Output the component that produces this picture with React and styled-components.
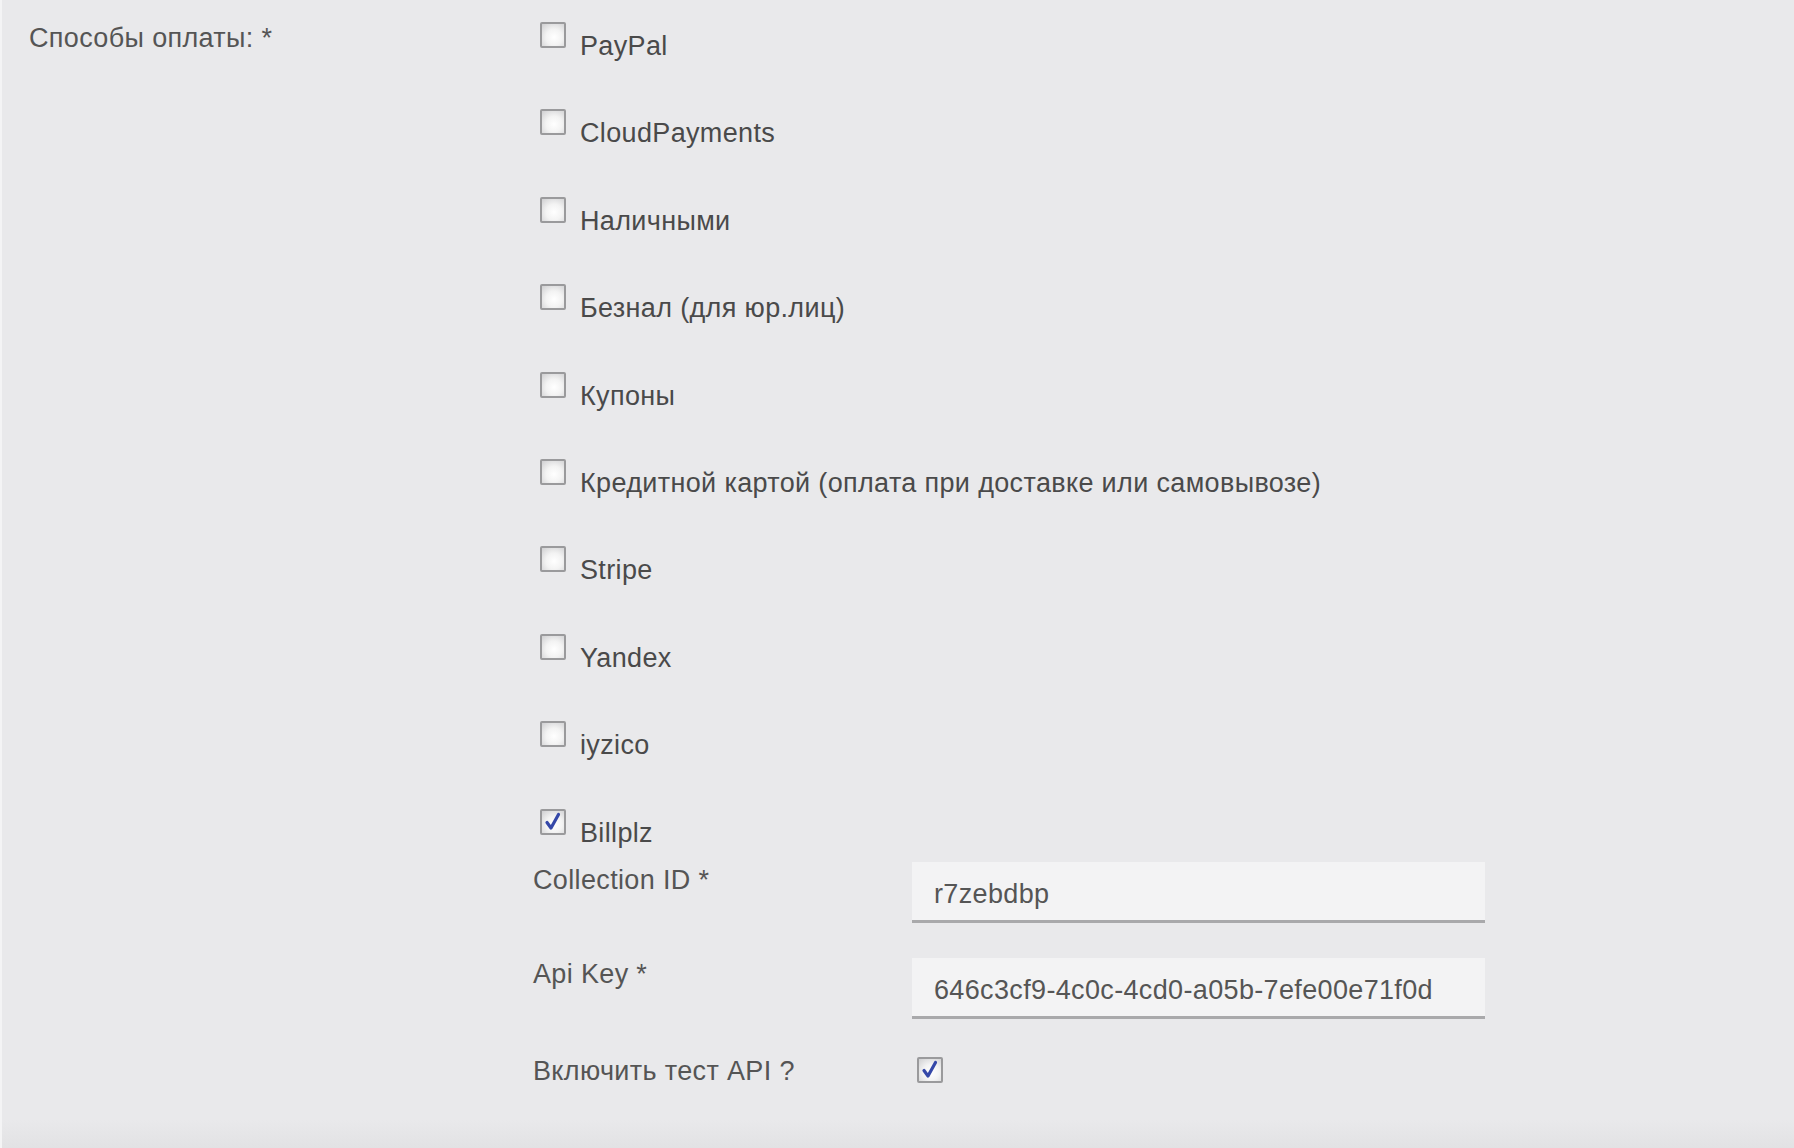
import React from "react";
import styled, { createGlobalStyle } from "styled-components";

const GlobalStyle = createGlobalStyle`
  html, body {
    margin: 0;
    padding: 0;
    background: #e9e9eb;
  }
  body {
    font-family: "Liberation Sans", Arial, sans-serif;
    color: #505050;
  }
`;

const Page = styled.div`
  min-height: 1148px;
  box-sizing: border-box;
  border-left: 2px solid #f4f4f5;
  background: linear-gradient(#e9e9eb 0, #e9e9eb 1120px, #e2e2e4 1148px);
  display: grid;
  grid-template-columns: 530px 1fr;
`;

const FieldLabel = styled.div`
  font-size: 27px;
  letter-spacing: 0.35px;
  line-height: 29px;
  color: #555;
  padding: 24px 0 0 27px;
`;

const Options = styled.div`
  display: flex;
  flex-direction: column;
`;

const OptionRow = styled.label`
  display: flex;
  align-items: flex-start;
  height: 87.4px;
  cursor: pointer;
`;

const OptionText = styled.span`
  font-size: 27px;
  letter-spacing: 0.35px;
  line-height: 29px;
  color: #4a4a4a;
  margin: 32px 0 0 14px;
`;

const Box = styled.span`
  flex: none;
  box-sizing: border-box;
  width: 26px;
  height: 26px;
  margin-top: ${(p) => p.$top}px;
  margin-left: ${(p) => p.$left}px;
  border: 2px solid #9a9a9c;
  border-radius: 2px;
  background: radial-gradient(circle at 55% 60%, #ffffff 0%, #f3f3f3 45%, #cfcfd1 100%);
  display: flex;
  align-items: center;
  justify-content: center;
`;

const Check = ({ checked, top = 22, left = 8 }) => (
  <Box $top={top} $left={left}>
    {checked && (
      <svg width="20" height="20" viewBox="0 0 20 20">
        <path
          d="M4 10.5 L8 16 L15.5 2.5"
          fill="none"
          stroke="#3548a8"
          strokeWidth="3.2"
          strokeLinecap="round"
          strokeLinejoin="round"
        />
      </svg>
    )}
  </Box>
);

const SubForm = styled.div`
  display: flex;
  flex-direction: column;
  margin-top: -12px;
  padding-left: 1px;
`;

const SubRow = styled.div`
  display: grid;
  grid-template-columns: 379px 573px;
  align-items: start;
  margin-bottom: ${(p) => p.$gap}px;
`;

const SubLabel = styled.div`
  font-size: 27px;
  letter-spacing: 0.35px;
  line-height: 29px;
  color: #555;
  padding-top: ${(p) => p.$pad}px;
`;

const TextInput = styled.input`
  box-sizing: border-box;
  width: 573px;
  height: 61px;
  border: none;
  border-bottom: 3px solid #a9a9ab;
  background: #f3f3f4;
  padding: 7px 0 0 22px;
  font-family: "Liberation Sans", Arial, sans-serif;
  font-size: 27px;
  letter-spacing: 0.35px;
  color: #555;
  outline: none;
`;

const methods = [
  "PayPal",
  "CloudPayments",
  "Наличными",
  "Безнал (для юр.лиц)",
  "Купоны",
  "Кредитной картой (оплата при доставке или самовывозе)",
  "Stripe",
  "Yandex",
  "iyzico",
  "Billplz",
];

export default function App() {
  return (
    <>
      <GlobalStyle />
      <Page>
        <FieldLabel>Способы оплаты: *</FieldLabel>
        <Options>
          {methods.map((m) => (
            <OptionRow key={m}>
              <Check checked={m === "Billplz"} />
              <OptionText>{m}</OptionText>
            </OptionRow>
          ))}
          <SubForm>
            <SubRow $gap={35}>
              <SubLabel $pad={4}>Collection ID *</SubLabel>
              <TextInput defaultValue="r7zebdbp" />
            </SubRow>
            <SubRow $gap={38}>
              <SubLabel $pad={2}>Api Key *</SubLabel>
              <TextInput defaultValue="646c3cf9-4c0c-4cd0-a05b-7efe00e71f0d" />
            </SubRow>
            <SubRow $gap={0}>
              <SubLabel $pad={0}>Включить тест API ?</SubLabel>
              <Check checked top={0} left={5} />
            </SubRow>
          </SubForm>
        </Options>
      </Page>
    </>
  );
}
